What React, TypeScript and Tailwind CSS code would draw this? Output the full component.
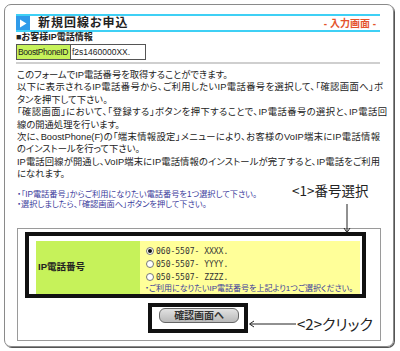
import React from "react";

const jp = "font-['Liberation_Sans','Noto_Sans_CJK_JP',sans-serif] [font-feature-settings:'palt']";

// text and the width each line takes in the reference (0 = natural width)
const bodyLines: [string, number][] = [
  ["このフォームでIP電話番号を取得することができます。", 0],
  ["以下に表示されるIP電話番号から、ご利用したいIP電話番号を選択して、「確認画面へ」ボ", 366],
  ["タンを押下して下さい。", 0],
  ["「確認画面」において、「登録する」ボタンを押下することで、IP電話番号の選択と、IP電話回", 370],
  ["線の開通処理を行います。", 0],
  ["次に、BoostPhone(F)の「端末情報設定」メニューにより、お客様のVoIP端末にIP電話情報", 363],
  ["のインストールを行って下さい。", 0],
  ["IP電話回線が開通し、VoIP端末にIP電話情報のインストールが完了すると、IP電話をご利用", 363],
  ["になれます。", 0],
];

const numbers = [
  { prefix: "060", tail: "XXXX.", checked: true },
  { prefix: "050", tail: "YYYY.", checked: false },
  { prefix: "050", tail: "ZZZZ.", checked: false },
];

const Radio: React.FC<{ checked: boolean }> = ({ checked }) => (
  <span className="w-[8px] h-[8px] rounded-full border border-[#777] bg-white flex items-center justify-center shrink-0">
    {checked && <span className="w-[4px] h-[4px] rounded-full bg-[#111]" />}
  </span>
);

export default function App() {
  return (
    <div className={`relative w-[400px] h-[351px] bg-white p-[4px] text-[#222] ${jp}`}>
      <div className="w-[390px] h-[343px] border border-[#8a8a8a] rounded-[7px] shadow-[1px_1px_0_#555] pt-[9px] pl-[11px] pr-[13px]">
        {/* header */}
        <div className="flex items-center h-[18px] border-y-2 border-[#3fd0f5]">
          <div className="w-[14px] h-[14px] bg-[#2f9bea] flex items-center justify-center">
            <svg width="8" height="9" viewBox="0 0 8 9">
              <path d="M1 0.5 L7.5 4.5 L1 8.5 Z" fill="#fff" />
            </svg>
          </div>
          <span className="ml-[8px] text-[12px] font-bold tracking-[1px]">新規回線お申込</span>
          <span className="ml-auto mr-[4px] text-[10px] font-bold text-[#e4532c]">- 入力画面 -</span>
        </div>

        <div className="h-[10px] leading-[10px] text-[9px] font-bold">■お客様IP電話情報</div>

        <div className="mt-[2px] flex w-[130px] h-[16px] border border-[#555] text-[8.5px] leading-[14px]">
          <div className="w-[54px] bg-[#c6f25a] border-r border-[#555] pl-[1px] tracking-[-0.4px] whitespace-nowrap overflow-hidden">
            BoostPhoneID
          </div>
          <div className="flex-1 px-[1px]">f2s1460000XX.</div>
        </div>

        <div className="mt-[2px] h-[2px] bg-[#cfcfcf]" />

        {/* description */}
        <div className="mt-[5px] ml-[1px] text-[9.3px] leading-[12.4px]">
          {bodyLines.map(([l, w], i) =>
            w ? (
              <div key={i} style={{ width: w }} className="text-justify [text-align-last:justify]">
                {l}
              </div>
            ) : (
              <div key={i} className="whitespace-nowrap">{l}</div>
            )
          )}
        </div>

        <div className="mt-[9px] ml-[1px] text-[8.2px] leading-[10px] text-[#3b3b9b] whitespace-nowrap">
          <div>・「IP電話番号」からご利用になりたい電話番号を1つ選択して下さい。</div>
          <div>・選択しましたら、「確認画面へ」ボタンを押して下さい。</div>
        </div>

        {/* selection panel */}
        <div className="mt-[18px] ml-[1px] w-[364px] h-[113px] border border-[#9a9a9a] pt-[12px]">
          <div className="ml-[18px] flex w-[324px] h-[53px]">
            <div className="w-[104px] bg-[#c6f25a] flex items-center pl-[2px] text-[9.5px] font-bold">IP電話番号</div>
            <div className="flex-1 bg-[#ffff99] pl-[6px] pt-[4px] text-[9.5px] leading-[13px]">
              {numbers.map((n, i) => (
                <div key={i} className="flex items-center gap-[2px]">
                  <Radio checked={n.checked} />
                  <span className="font-['DejaVu_Sans_Mono',monospace] text-[8px] text-[#333]">
                    {n.prefix}-5507- {n.tail}
                  </span>
                </div>
              ))}
              <div className="-ml-[1px] text-[8px] leading-[10px] text-[#3b3b9b] whitespace-nowrap">
                ・ご利用になりたいIP電話番号を上記より1つご選択ください。
              </div>
            </div>
          </div>
          <div className="mt-[14px] flex justify-center">
            <div className="w-[80px] h-[15px] rounded-[6px] border border-[#666] bg-gradient-to-b from-[#e2e2e2] to-[#b9b9b9] flex items-center justify-center text-[10px] font-bold text-[#333]">
              確認画面へ
            </div>
          </div>
        </div>
      </div>

      {/* annotations */}
      <div className="absolute left-[25px] top-[232px] w-[341px] h-[66px] border-[4px] border-[#111]" />
      <div className="absolute left-[148px] top-[303px] w-[100px] h-[30px] border-[4px] border-[#111]" />

      <div className="absolute left-[292px] top-[181px] text-[13.5px] leading-[18px] font-['Noto_Sans_CJK_JP',sans-serif] text-[#222]">
        &lt;1&gt;番号選択
      </div>
      <svg className="absolute left-[342px] top-[204px]" width="10" height="30" viewBox="0 0 10 30">
        <line x1="5" y1="0" x2="5" y2="28" stroke="#222" strokeWidth="1" />
        <path d="M2 24 L5 28.5 L8 24" fill="none" stroke="#222" strokeWidth="1" />
      </svg>

      <svg className="absolute left-[249px] top-[319px]" width="48" height="10" viewBox="0 0 48 10">
        <line x1="1" y1="5" x2="47" y2="5" stroke="#222" strokeWidth="1" />
        <path d="M5 2 L0.5 5 L5 8" fill="none" stroke="#222" strokeWidth="1" />
      </svg>
      <div className="absolute left-[297px] top-[315px] text-[15px] leading-[18px] font-['Noto_Sans_CJK_JP',sans-serif] text-[#222]">
        &lt;2&gt;クリック
      </div>
    </div>
  );
}
